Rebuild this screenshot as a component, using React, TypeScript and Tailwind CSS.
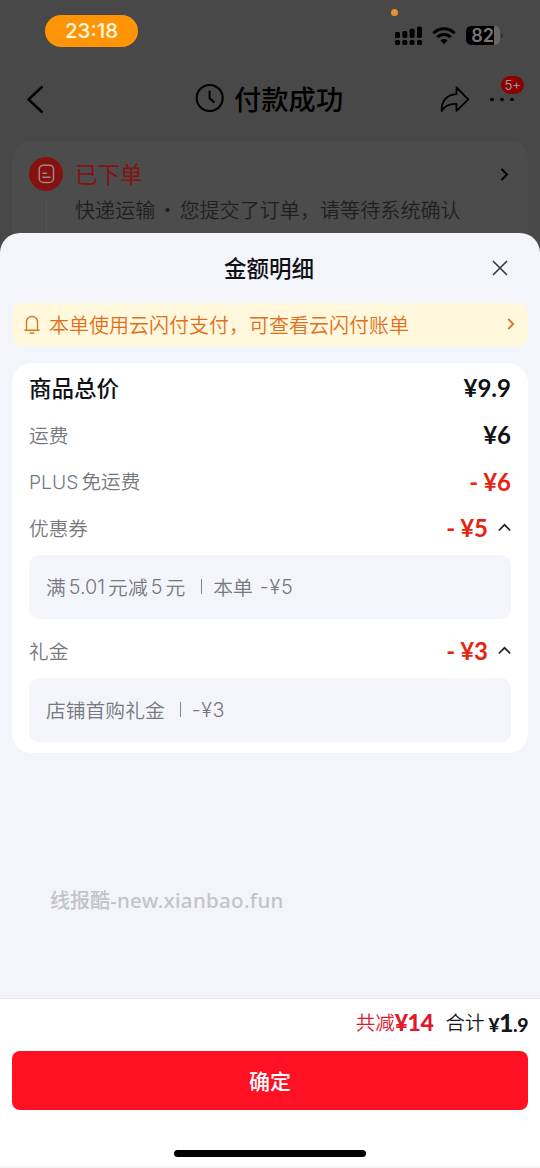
import { type ReactNode } from "react";
import clsx from "clsx";

function StatusBar() {
  return (
    <div className="relative flex h-[60px] shrink-0 items-start pl-[45px]">
      <div className="mt-[15px] flex h-8 w-[93px] items-center justify-center rounded-full bg-[#ff9406] font-['Inter'] text-[20.5px] leading-none font-medium text-[#fff6e0]">
        23:18
      </div>
      <span className="absolute top-[9px] left-[391px] size-[7px] rounded-full bg-[#e8952a]" />
      <div className="mt-[26px] ml-[257px] flex items-start">
        {/* Signal */}
        <svg width="27" height="19" viewBox="0 0 27 19" fill="#000">
          <rect x="0" y="6" width="5" height="6" rx="1.5" />
          <rect x="7.3" y="5" width="5" height="7" rx="1.5" />
          <rect x="14.6" y="2.8" width="5" height="9.2" rx="1.5" />
          <rect x="22" y="0.5" width="5" height="11.5" rx="1.5" />
          <rect x="0" y="14" width="5" height="5" rx="1.5" />
          <rect x="7.3" y="14" width="5" height="5" rx="1.5" />
          <rect x="14.6" y="14" width="5" height="5" rx="1.5" />
          <rect x="22" y="14" width="5" height="5" rx="1.5" />
        </svg>
        {/* Wifi */}
        <svg className="ml-[10px]" width="24" height="19" viewBox="0 0 24 19" fill="none" stroke="#000" strokeWidth="3">
          <path d="M1.4 7.2a15 15 0 0 1 21.2 0" />
          <path d="M5.3 11.3a9.5 9.5 0 0 1 13.4 0" />
          <path d="M12 18.2l-3.6-3.7a5.1 5.1 0 0 1 7.2 0z" fill="#000" stroke="none" />
        </svg>
        {/* Battery */}
        <div className="ml-[10px] flex h-[19px] w-[34px] overflow-hidden rounded-[5px] bg-[#666]">
          <div className="flex w-[28px] items-center justify-end bg-black font-['Inter'] text-[18px] leading-none font-semibold text-[#777]">
            82
          </div>
        </div>
        <span className="mt-[7px] ml-px h-[5px] w-[2px] rounded-r-full bg-[#333]" />
      </div>
    </div>
  );
}

function NavBar() {
  return (
    <div className="flex h-[81px] shrink-0 items-start">
      <svg className="mt-[25px] ml-[26px]" width="18" height="29" viewBox="0 0 18 29" fill="none" stroke="#000" strokeWidth="2.4">
        <path d="M16.5 1.5 2.5 14.5l14 13" />
      </svg>
      <svg className="mt-6 ml-[151px]" width="29" height="29" viewBox="0 0 29 29" fill="none" stroke="#000" strokeWidth="2.1">
        <circle cx="14.7" cy="14" r="13" />
        <path d="M14.6 6.5v7.8l4.8 4.3" />
      </svg>
      <h1 className="mt-6 ml-[10px] text-[27.3px] leading-[28px] font-medium text-black">付款成功</h1>
      <svg className="mt-[26px] ml-[97px]" width="30" height="27" viewBox="0 0 30 27" fill="none" stroke="#000" strokeWidth="1.8" strokeLinejoin="round">
        <path d="M16.5 1.5 28.3 13.3 16.5 24.8V18C8.5 17.5 4.5 20 1.6 25 1.3 15.5 6.5 8.6 16.5 8.2z" />
      </svg>
      <div className="relative mt-[38px] ml-[20px] flex gap-[6.6px]">
        <span className="size-[3.4px] rounded-full bg-black" />
        <span className="size-[3.4px] rounded-full bg-black" />
        <span className="size-[3.4px] rounded-full bg-black" />
        <span className="absolute -top-[22px] left-[11px] flex h-[18px] w-[23px] items-center justify-center rounded-full bg-[#8c0000] font-['Inter'] text-[13px] leading-none text-[#999]">
          5+
        </span>
      </div>
    </div>
  );
}

function OrderStatus() {
  return (
    <div className="mx-3 flex h-[120px] shrink-0 items-start rounded-t-[18px] bg-[#4c4c4c]">
      <div className="mt-4 ml-[17px] flex flex-col items-center">
        <div className="flex size-[34px] items-center justify-center rounded-full bg-[#861111]">
          <svg width="17" height="20" viewBox="0 0 17 20" fill="none" stroke="#a08585" strokeWidth="1.5">
            <rect x="1.3" y="1.2" width="14.2" height="17.2" rx="4" />
            <path d="M4.3 9.3h4.5M4.3 13.2h8.2" />
          </svg>
        </div>
        <div className="mt-2 h-[60px] w-px bg-[#545454]" />
      </div>
      <div className="mt-5 ml-3">
        <p className="text-[22.5px] leading-6 text-[#861111]">已下单</p>
        <p className="mt-[14px] flex text-[20.1px] leading-[22px] font-[350] text-[#1f1f1f]">
          快递运输<span className="w-[24px] text-center">·</span>您提交了订单，请等待系统确认
        </p>
      </div>
      <svg className="mt-[27px] ml-[39px]" width="9" height="13" viewBox="0 0 9 13" fill="none" stroke="#000" strokeWidth="2">
        <path d="M1.5 1l5.5 5.5L1.5 12" />
      </svg>
    </div>
  );
}

function Row({ label, children, strong, open }: { label: ReactNode; children: ReactNode; strong?: boolean; open?: boolean }) {
  return (
    <div className="flex h-[46.7px] items-center justify-between">
      <span className={clsx("pb-px", strong ? "text-[22.5px] font-medium text-[#101116]" : "text-[19.7px] font-[350] text-[#77787c]")}>
        {label}
      </span>
      <span className="flex items-center">
        {children}
        {open && (
          <svg className="mb-[2px] ml-[10px]" width="13" height="9" viewBox="0 0 13 9" fill="none" stroke="#222" strokeWidth="1.7">
            <path d="M.8 7.5l5.7-5.7 5.7 5.7" />
          </svg>
        )}
      </span>
    </div>
  );
}

function Price({ value, minus }: { value: string; minus?: boolean }) {
  return (
    <span className={clsx("font-['Lato'] text-[24px] leading-none font-bold", minus ? "text-[#e8230f]" : "text-[#101116]")}>
      {minus && <span className="mr-[5px]">-</span>}¥{value}
    </span>
  );
}

function Detail({ children }: { children: ReactNode }) {
  return (
    <div className="flex h-16 items-center rounded-[10px] bg-[#f4f5fa] pl-[17px] text-[19.8px] font-[350] text-[#77787c]">
      {children}
    </div>
  );
}

function AmountCard() {
  return (
    <section className="mx-3 mt-[17px] h-[390px] rounded-[20px] bg-white px-[17px] pt-[2px]">
      <Row label="商品总价" strong>
        <Price value="9.9" />
      </Row>
      <Row label="运费">
        <Price value="6" />
      </Row>
      <Row label={<><span className="mr-[3px] font-['Inter'] text-[19.3px]">PLUS</span>免运费</>}>
        <Price value="6" minus />
      </Row>
      <Row label="优惠券" open>
        <Price value="5" minus />
      </Row>
      <div className="mt-[3.2px] mb-[9px]">
        <Detail>
          满<span className="mx-[3px] pt-px font-['Inter']">5.01</span>元减<span className="mx-[3px] pt-px font-['Inter']">5</span>元
          <span className="mr-[11px] ml-[16px] h-[15px] w-px bg-[#85868a]" />
          本单<span className="ml-[7px] pt-px font-['Inter'] tracking-[.8px]">-¥5</span>
        </Detail>
      </div>
      <Row label="礼金" open>
        <Price value="3" minus />
      </Row>
      <div className="mt-[3.3px]">
        <Detail>
          <span className="pb-px">店铺首购礼金</span>
          <span className="mr-[11px] ml-[15px] h-[15px] w-px bg-[#85868a]" />
          <span className="pt-px font-['Inter'] tracking-[.6px]">-¥3</span>
        </Detail>
      </div>
    </section>
  );
}

function Footer() {
  return (
    <footer className="flex h-[170px] shrink-0 flex-col border-t border-[#e6e7eb] bg-white px-3">
      <div className="flex h-[52px] items-center justify-end pb-[6px] text-[19.5px] leading-none font-[350]">
        <span className="text-[#e0192d]">共减</span>
        <span className="font-['Lato'] text-[23px] font-black tracking-[-.4px] text-[#e0192d]">¥14</span>
        <span className="ml-3 text-[#16171c]">合计</span>
        <span className="ml-1 flex items-baseline font-['Lato'] font-black tracking-[-.5px] text-[#16171c]">
          <span className="text-[19px]">¥</span>
          <span className="text-[25px]">1</span>
          <span className="text-[19.5px]">.9</span>
        </span>
      </div>
      <button className="h-[59px] w-full rounded-[8px] bg-[#ff1022] text-[21px] font-medium text-white">确定</button>
      <div className="mx-auto mt-[40px] h-[7px] w-48 rounded-full bg-black" />
      <div className="-mx-3 mt-auto h-[2px] shrink-0 bg-[#f7f7fb]" />
    </footer>
  );
}

export default function App() {
  return (
    <div className="flex h-[1168px] w-[540px] flex-col overflow-hidden bg-[#484848] font-['Noto_Sans_CJK_SC',sans-serif]">
      <StatusBar />
      <NavBar />
      <OrderStatus />

      {/* Bottom sheet */}
      <main className="relative -mt-7 flex grow flex-col rounded-t-[20px] bg-[#f4f5fa]">
        <div className="flex h-[70px] shrink-0 items-center justify-center">
          <h2 className="mr-[2px] mb-[2px] text-[22.5px] leading-none font-medium text-[#101116]">金额明细</h2>
          <svg className="absolute top-[27px] right-[32px]" width="16" height="16" viewBox="0 0 16 16" fill="none" stroke="#333" strokeWidth="1.5">
            <path d="M1 1l14 14M15 1 1 15" />
          </svg>
        </div>

        <div className="mx-3 flex h-[43px] shrink-0 items-center rounded-[10px] bg-[#fff8dd] pr-[13px] pl-3 text-[#e0701c]">
          <svg className="mb-px" width="16" height="19" viewBox="0 0 16 19" fill="none" stroke="#d9762c" strokeWidth="1.4">
            <path d="M2.5 15.2V7a5.5 5.5 0 0 1 11 0v8.2M.5 15.2h15M5.5 18h5" />
          </svg>
          <span className="ml-[9px] text-[20px] leading-none font-[350]">本单使用云闪付支付，可查看云闪付账单</span>
          <svg className="mb-px ml-auto" width="8" height="12" viewBox="0 0 8 12" fill="none" stroke="#d9762c" strokeWidth="1.8">
            <path d="M1.2 1l5 5-5 5" />
          </svg>
        </div>

        <AmountCard />

        <p className="mt-[133px] ml-[50px] text-[20px] leading-7 font-medium text-[#c3c4c8]">
          线报酷<span className="font-['Noto_Sans'] text-[20.5px] tracking-[.3px]">-new.xianbao.fun</span>
        </p>
        <div className="grow" />
        <Footer />
      </main>
    </div>
  );
}
